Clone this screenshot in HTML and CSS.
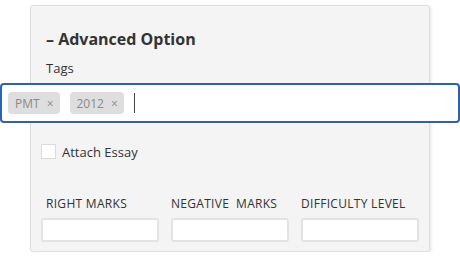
FILE: index.html
```html
<!DOCTYPE html>
<html lang="en">
<head>
  <meta charset="UTF-8">
  <meta name="viewport" content="width=device-width, initial-scale=1.0">
  <title>Advanced Option</title>
  <link rel="stylesheet" href="styles.css">
</head>
<body>
  <div class="panel">
    <h3 class="title">&ndash; Advanced Option</h3>

    <label class="field-label">Tags</label>
    <div class="tag-input">
      <span class="chip">PMT <span class="chip-x">&times;</span></span>
      <span class="chip">2012 <span class="chip-x">&times;</span></span>
      <span class="caret"></span>
    </div>

    <label class="check-row">
      <span class="check-box"></span>
      Attach Essay
    </label>

    <div class="fields">
      <div class="field">
        <span class="caps first">RIGHT MARKS</span>
        <input type="text">
      </div>
      <div class="field">
        <span class="caps">NEGATIVE&nbsp; MARKS</span>
        <input type="text">
      </div>
      <div class="field">
        <span class="caps">DIFFICULTY LEVEL</span>
        <input type="text">
      </div>
    </div>
  </div>
</body>
</html>
```

FILE: styles.css
```css
body {
  margin: 0;
  font-family: 'Open Sans', 'Liberation Sans', sans-serif;
  background: #ffffff;
  color: #333;
}
.panel {
  margin: 5px 0 0 30px;
  width: 400px;
  box-sizing: border-box;
  background: #f4f4f4;
  border: 1px solid #dedede;
  border-radius: 3px;
  box-shadow: 1px 1px 3px rgba(0, 0, 0, 0.12);
  padding: 22px 0 9px;
}
.title {
  margin: 0 0 0 15px;
  font-size: 16px;
  line-height: 22px;
  font-weight: 700;
  color: #333;
}
.field-label {
  display: block;
  margin: 9px 0 0 15px;
  font-size: 13px;
  line-height: 18px;
  color: #333;
}
.tag-input {
  display: flex;
  align-items: center;
  margin: 6px 0 0 -31px;
  width: 460px;
  height: 40px;
  box-sizing: border-box;
  padding-left: 6px;
  background: #fff;
  border: 2px solid #2c62ae;
  border-radius: 4px;
}
.chip {
  display: flex;
  align-items: center;
  height: 22px;
  padding: 0 6px 0 7px;
  margin-right: 10px;
  background: #dedede;
  border-radius: 4px;
  color: #8a8a8a;
  font-size: 12px;
}
.chip-x {
  margin-left: 7px;
  font-size: 12px;
}
.caret {
  width: 1px;
  height: 20px;
  background: #444;
}
.check-row {
  display: flex;
  align-items: center;
  margin: 21px 0 0 10px;
  height: 15px;
  font-size: 13px;
  color: #333;
}
.check-box {
  width: 15px;
  height: 15px;
  box-sizing: border-box;
  background: #fff;
  border: 1px solid #dcdcdc;
  margin-right: 6px;
}
.fields {
  display: grid;
  grid-template-columns: repeat(3, 118px);
  column-gap: 12px;
  padding: 0 10px;
  margin-top: 37px;
}
.caps {
  display: block;
  font-size: 12px;
  line-height: 16px;
  letter-spacing: 0.3px;
  color: #333;
}
.caps.first {
  padding-left: 5px;
}
.field input {
  display: block;
  width: 100%;
  height: 24px;
  margin-top: 6px;
  box-sizing: border-box;
  background: #fff;
  border: 2px solid #e3e3e3;
  border-radius: 3px;
}
```
